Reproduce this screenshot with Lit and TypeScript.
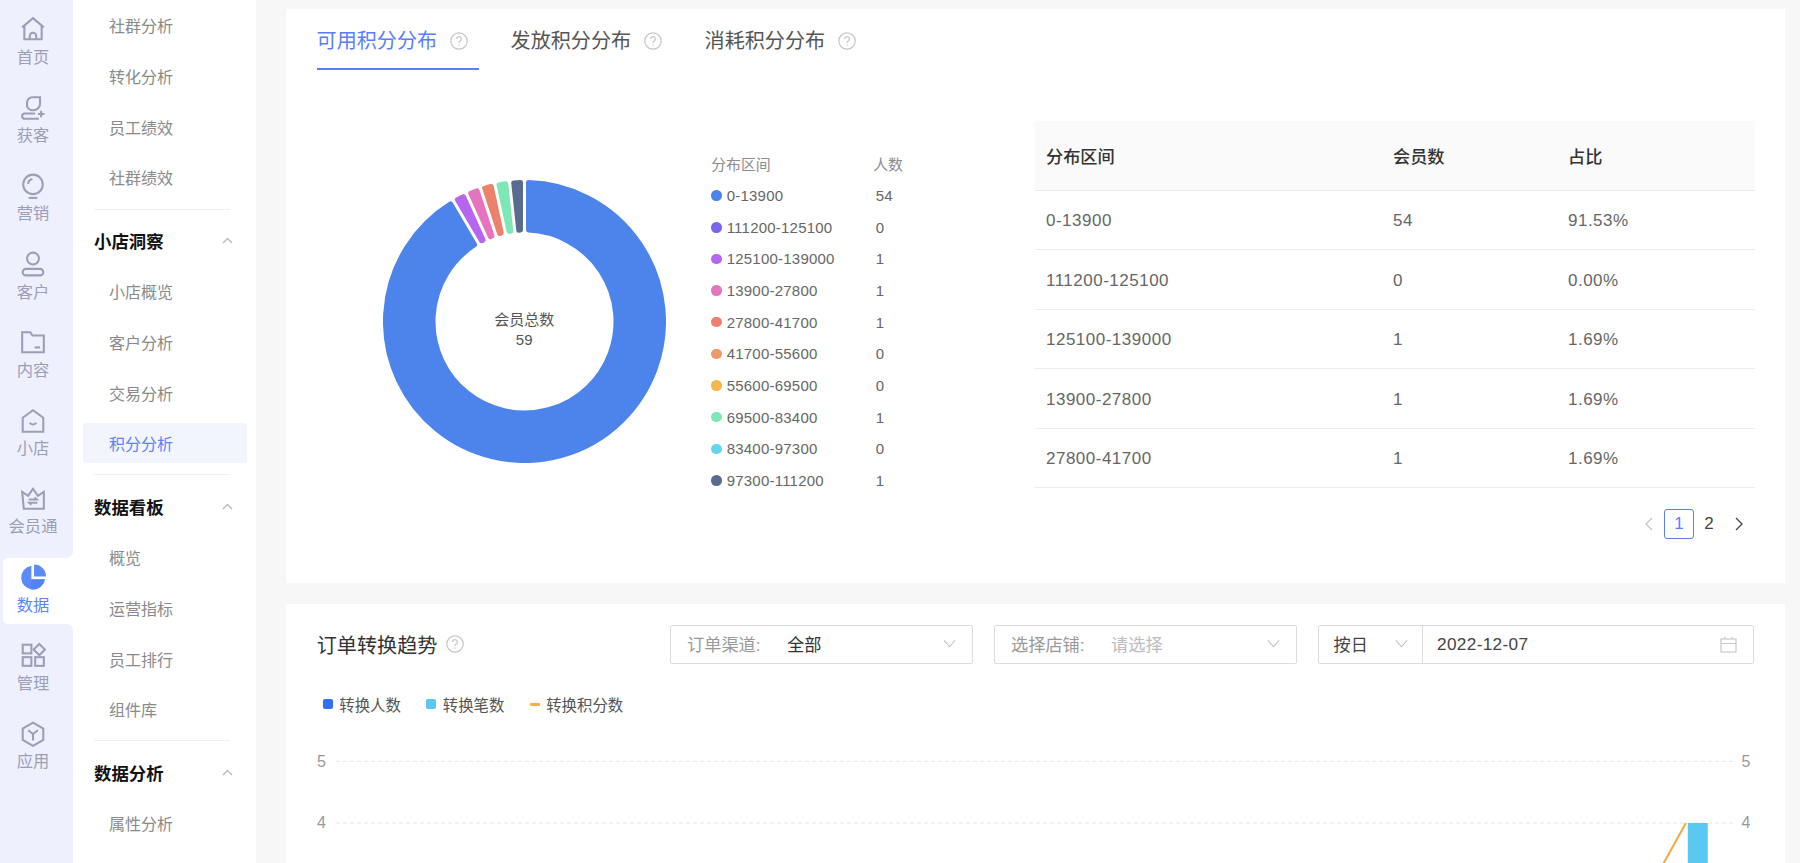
import { LitElement, html, css, svg } from 'lit';
import { customElement } from 'lit/decorators.js';
import { classMap } from 'lit/directives/class-map.js';

const railIcons: Record<string, unknown> = {
  home: svg`<path d="M2 10.5 12 2l10 8.5"/><path d="M4 9v12.5h16V9"/><path d="M9 21.5v-3a3 3 0 0 1 6 0v3"/>`,
  add: svg`<path d="M6.5 10.5V7a5 5 0 0 1 5-5h7v6a6 6 0 0 1-6 6 6 6 0 0 1-6-3.5z"/><path d="M14 17H4.5a2.3 2.3 0 0 0 0 5h13"/><path d="M19.5 14.5v6M16.5 17.5h6"/>`,
  bulb: svg`<circle cx="12" cy="10.5" r="9"/><path d="M7.5 10a5 5 0 0 1 4-4.5"/><path d="M8 23h8"/>`,
  user: svg`<circle cx="12" cy="7" r="5.5"/><rect x="2.5" y="16.5" width="19" height="6" rx="3"/>`,
  folder: svg`<path d="M2 3h7.5l2 3H22v15.5H2z"/><path d="M13.5 17h5"/>`,
  shop: svg`<path d="M2.5 9 12 2l9.5 7v13h-19z"/><path d="M9 13.5a3.4 3.4 0 0 0 6 0"/>`,
  crown: svg`<path d="M2 5.5 7.5 9 12 2.5 16.5 9 22 5.5V21H3.5z"/><path d="M8 12.5h7.5l-2-1.8M16 15.5H8.5l2 1.8"/>`,
  grid: svg`<rect x="2.5" y="2.5" width="8" height="8"/><path d="M17.8 1.8 23 7l-5.2 5.2L12.6 7z"/><rect x="2.5" y="14" width="8" height="8"/><rect x="14" y="14" width="8" height="8"/>`,
  hex: svg`<path d="M12 1.5 21.5 7v10.5L12 23l-9.5-5.5V7z"/><path d="M7.5 8.5 12 12l4.5-3.5M12 12v6"/>`,
};

const railItems = [
  { label: '首页', icon: 'home' },
  { label: '获客', icon: 'add' },
  { label: '营销', icon: 'bulb' },
  { label: '客户', icon: 'user' },
  { label: '内容', icon: 'folder' },
  { label: '小店', icon: 'shop' },
  { label: '会员通', icon: 'crown' },
  { label: '数据', icon: 'pie', active: true },
  { label: '管理', icon: 'grid' },
  { label: '应用', icon: 'hex' },
];

const navGroups = [
  { title: '', items: ['社群分析', '转化分析', '员工绩效', '社群绩效'] },
  { title: '小店洞察', items: ['小店概览', '客户分析', '交易分析', '积分分析'] },
  { title: '数据看板', items: ['概览', '运营指标', '员工排行', '组件库'] },
  { title: '数据分析', items: ['属性分析'] },
];

const ranges = [
  { range: '0-13900', count: 54, pct: '91.53%', color: '#4c84ec' },
  { range: '111200-125100', count: 0, pct: '0.00%', color: '#7a67ee' },
  { range: '125100-139000', count: 1, pct: '1.69%', color: '#b565ee' },
  { range: '13900-27800', count: 1, pct: '1.69%', color: '#e673bd' },
  { range: '27800-41700', count: 1, pct: '1.69%', color: '#ec826b' },
  { range: '41700-55600', count: 0, pct: '', color: '#ec9a6a' },
  { range: '55600-69500', count: 0, pct: '', color: '#f2b84b' },
  { range: '69500-83400', count: 1, pct: '', color: '#7de8b5' },
  { range: '83400-97300', count: 0, pct: '', color: '#66d4ef' },
  { range: '97300-111200', count: 1, pct: '', color: '#596b8f' },
];

// donut slice with rounded corners: inset path + same colour stroke
function slice(a0: number, a1: number) {
  const c = 141.5, ro = 139, ri = 91.5, d = 4;
  const pt = (r: number, a: number) => `${(c + r * Math.sin(a)).toFixed(2)} ${(c - r * Math.cos(a)).toFixed(2)}`;
  const large = a1 - a0 > Math.PI ? 1 : 0;
  return `M${pt(ro, a0 + Math.asin(d / ro))}A${ro} ${ro} 0 ${large} 1 ${pt(ro, a1 - Math.asin(d / ro))}` +
    `L${pt(ri, a1 - Math.asin(d / ri))}A${ri} ${ri} 0 ${large} 0 ${pt(ri, a0 + Math.asin(d / ri))}Z`;
}

const helpIcon = html`<svg class="help" viewBox="0 0 18 18">
  <circle cx="9" cy="9" r="8.2"/>
  <path d="M6.6 7a2.4 2.4 0 1 1 3.6 2.1c-.8.5-1.2.9-1.2 1.9"/>
  <path d="M9 12.6v1.2"/>
</svg>`;

const chevronDown = html`<svg class="chev" viewBox="0 0 14 9"><path d="M1 1l6 7 6-7"/></svg>`;

@customElement('app-root')
export class AppRoot extends LitElement {
  static styles = css`
    :host {
      display: block;
      height: 863px;
      overflow: hidden;
      font-family: "Liberation Sans", "Noto Sans CJK SC", sans-serif;
    }

    .page {
      display: flex;
      height: 863px;
      overflow: hidden;
    }

    /* icon rail */
    .rail {
      width: 73.4px;
      flex: none;
      box-sizing: border-box;
      padding: 9.8px 0 0 3px;
      background: #eef0fd;
    }

    .rail-item {
      position: relative;
      height: 66px;
      margin-bottom: 12.25px;
      display: flex;
      flex-direction: column;
      align-items: center;
      padding-right: 10.4px;
      color: #9b9eb8;
      font-size: 16.3px;
      line-height: 20px;
      border-radius: 5px 0 0 5px;
    }

    .rail-item svg {
      width: 26px;
      height: 26px;
      margin-top: 6.5px;
      margin-bottom: 4.5px;
      fill: none;
      stroke: #9b9eb8;
      stroke-width: 1.9;
    }

    .rail-item.active {
      background: #fff;
      color: #5b84f8;
    }

    .rail-item.active svg {
      stroke: none;
    }

    .rail-item.active::before,
    .rail-item.active::after {
      content: '';
      position: absolute;
      right: 0;
      width: 6px;
      height: 6px;
    }

    .rail-item.active::before {
      top: -6px;
      background: radial-gradient(circle at 0 0, transparent 5.5px, #fff 6px);
    }

    .rail-item.active::after {
      bottom: -6px;
      background: radial-gradient(circle at 0 100%, transparent 5.5px, #fff 6px);
    }

    /* second level nav */
    .nav {
      width: 182.6px;
      flex: none;
      box-sizing: border-box;
      display: flex;
      flex-direction: column;
      background: #fff;
    }

    .nav-item {
      flex: none;
      height: 40.2px;
      margin: 5.23px 9px 5.23px 9.7px;
      padding-left: 26px;
      display: flex;
      align-items: center;
      font-size: 16px;
      color: #8a8a8a;
      border-radius: 3px;
    }

    .nav-item.active {
      background: #f3f5fe;
      color: #5b84f8;
    }

    .nav-divider {
      flex: none;
      height: 1px;
      margin: 6px 26px 5.8px 20.6px;
      background: #f0f0f0;
    }

    .nav-head {
      flex: none;
      height: 50.7px;
      padding: 0 23px 0 20.6px;
      display: flex;
      align-items: center;
      justify-content: space-between;
      font-size: 17.4px;
      font-weight: 700;
      color: #111;
    }

    .nav-head svg {
      width: 11px;
      height: 7px;
      fill: none;
      stroke: #b9b9b9;
      stroke-width: 1.4;
    }

    /* content */
    .main {
      flex: 1;
      min-width: 0;
      box-sizing: border-box;
      padding: 9.3px 15px 0 30px;
      background: #f7f7f7;
    }

    .card {
      background: #fff;
    }

    .card-top {
      height: 573.7px;
      margin-bottom: 21px;
      box-sizing: border-box;
    }

    .tabs {
      display: flex;
      gap: 32px;
      padding-left: 30.6px;
    }

    .tab {
      box-sizing: border-box;
      width: 162px;
      height: 60.7px;
      padding-top: 18px;
      display: flex;
      align-items: flex-start;
      gap: 12.5px;
      font-size: 20.1px;
      line-height: 28px;
      color: #555;
      border-bottom: 2.5px solid transparent;
    }

    .tab.active {
      color: #5b7ef8;
      border-bottom-color: #5b7ef8;
    }

    .help {
      width: 18px;
      height: 18px;
      flex: none;
      margin-top: 5px;
      fill: none;
      stroke: #c6c6c6;
      stroke-width: 1.2;
    }

    .dist {
      display: flex;
      margin-top: 50.7px;
    }

    .dist-left {
      width: 749px;
      flex: none;
      display: flex;
      box-sizing: border-box;
      padding-left: 96.7px;
    }

    .donut {
      position: relative;
      width: 283px;
      height: 283px;
      flex: none;
      margin-top: 59.3px;
    }

    .donut svg {
      display: block;
      width: 283px;
      height: 283px;
    }

    .donut-center {
      position: absolute;
      left: 0;
      right: 0;
      top: 130px;
      text-align: center;
      font-size: 15px;
      line-height: 20px;
      color: #555;
    }

    .legend {
      margin: 27.5px 0 0 45.5px;
      display: grid;
      grid-template-columns: 162px auto;
      grid-auto-rows: 31.65px;
      align-items: center;
      font-size: 15px;
      letter-spacing: 0.22px;
      color: #666;
    }

    .legend-head {
      color: #8c8c8c;
      font-size: 14.9px;
      letter-spacing: 0;
    }

    .legend-name {
      display: flex;
      align-items: center;
      gap: 5px;
    }

    .dot {
      width: 10.5px;
      height: 10.5px;
      border-radius: 50%;
      flex: none;
    }

    .legend-count {
      padding-left: 2.5px;
    }

    .dist-right {
      width: 720px;
      flex: none;
    }

    .row {
      display: grid;
      grid-template-columns: 347px 175px 198px;
      box-sizing: border-box;
      align-items: center;
      height: 59.5px;
      padding: 2px 0 0 11px;
      font-size: 17px;
      letter-spacing: 0.5px;
      color: #666;
      border-bottom: 1px solid #ececec;
    }

    .row.head {
      height: 70.3px;
      padding-top: 0;
      background: #fafafa;
      font-size: 17.2px;
      letter-spacing: 0;
      font-weight: 500;
      color: #333;
    }

    .pager {
      display: flex;
      justify-content: flex-end;
      margin: 20.5px 1px 0 0;
    }

    .pager div {
      box-sizing: border-box;
      width: 30px;
      height: 30px;
      display: flex;
      align-items: center;
      justify-content: center;
      font-size: 17px;
      color: #444;
    }

    .pager .current {
      color: #5b7ef8;
      border: 1px solid #5b7ef8;
      border-radius: 3px;
    }

    .pager svg {
      width: 10px;
      height: 14px;
      fill: none;
      stroke: #444;
      stroke-width: 1.3;
    }

    .pager svg.off {
      stroke: #c4c4c4;
    }

    /* trend card */
    .card-trend {
      box-sizing: border-box;
      height: 400px;
      padding: 20.7px 31px 0 30.8px;
    }

    .trend-head {
      display: flex;
      align-items: center;
      height: 39.6px;
    }

    .trend-title {
      font-size: 20.1px;
      color: #333;
      margin-right: 8.5px;
    }

    .trend-head .help {
      margin-top: 0;
    }

    .controls {
      margin-left: auto;
      display: flex;
      gap: 21px;
    }

    .select {
      box-sizing: border-box;
      width: 303px;
      height: 39.6px;
      padding: 0 16px 2px;
      display: flex;
      align-items: center;
      font-size: 17.2px;
      color: #333;
      border: 1px solid #dcdcdc;
      border-radius: 2px;
    }

    .select .lab {
      width: 100px;
      flex: none;
      color: #999;
    }

    .select .ph {
      color: #bdbdbd;
    }

    .chev {
      width: 13px;
      height: 9px;
      margin-left: auto;
      flex: none;
      fill: none;
      stroke: #bcbcbc;
      stroke-width: 1.1;
    }

    .range {
      box-sizing: border-box;
      width: 436px;
      height: 39.6px;
      display: flex;
      align-items: center;
      font-size: 17.2px;
      color: #444;
      border: 1px solid #dcdcdc;
      border-radius: 2px;
    }

    .range-unit {
      box-sizing: border-box;
      width: 104px;
      height: 100%;
      flex: none;
      padding: 0 14.5px 2px;
      display: flex;
      align-items: center;
      border-right: 1px solid #dcdcdc;
    }

    .range-date {
      flex: 1;
      padding: 0 16px 0 14px;
      display: flex;
      align-items: center;
      justify-content: space-between;
      letter-spacing: 0.35px;
    }

    .range-date svg {
      width: 17px;
      height: 17px;
      fill: none;
      stroke: #c8c8c8;
      stroke-width: 1.2;
    }

    .chart-legend {
      display: flex;
      align-items: center;
      height: 20px;
      margin-top: 30px;
      padding-left: 6px;
      font-size: 15.4px;
      color: #555;
    }

    .chart-legend span {
      display: flex;
      align-items: center;
      gap: 6.5px;
      margin-right: 25.4px;
    }

    .chart-legend i {
      width: 10px;
      height: 10px;
      border-radius: 2px;
    }

    .chart-legend i.line {
      height: 2.5px;
      border-radius: 1px;
    }

    .chart {
      display: block;
      width: 1437.2px;
      height: 150px;
    }

    .chart text {
      font-size: 16px;
      fill: #999;
      dominant-baseline: central;
    }
  `;

  renderRail() {
    return html`<div class="rail">
      ${railItems.map(
        (r) => html`<div class=${classMap({ 'rail-item': true, active: !!r.active })}>
          ${r.icon === 'pie'
            ? html`<svg viewBox="0 0 24 24">
                <path fill="#5b8bf7" d="M10.5 1.6A11 11 0 1 0 23 14H10.5z"/>
                <path fill="#4c7ff0" d="M10.5 14H23a11 11 0 0 1-14.5 9 15 15 0 0 0 2-9z" opacity=".6"/>
                <path fill="#5b8bf7" d="M13 .5A11 11 0 0 1 24 11.5H13z"/>
              </svg>`
            : html`<svg viewBox="0 0 24 24">${railIcons[r.icon]}</svg>`}
          ${r.label}
        </div>`
      )}
    </div>`;
  }

  renderNav() {
    return html`<div class="nav">
      ${navGroups.map(
        (g, i) => html`
          ${i > 0
            ? html`<div class="nav-divider"></div>
                <div class="nav-head">
                  ${g.title}
                  <svg viewBox="0 0 11 7"><path d="M1 6l4.5-4.5L10 6"/></svg>
                </div>`
            : ''}
          ${g.items.map(
            (n) => html`<div class=${classMap({ 'nav-item': true, active: n === '积分分析' })}>${n}</div>`
          )}
        `
      )}
    </div>`;
  }

  renderDonut() {
    const total = ranges.reduce((s, r) => s + r.count, 0);
    let a = 0;
    const parts = ranges
      .filter((r) => r.count > 0)
      .map((r) => {
        const a0 = a;
        a += (r.count / total) * Math.PI * 2;
        return svg`<path d=${slice(a0, a)} fill=${r.color} stroke=${r.color} stroke-width="5" stroke-linejoin="round"/>`;
      });
    return html`<div class="donut">
      <svg viewBox="0 0 283 283">${parts}</svg>
      <div class="donut-center">会员总数<br />59</div>
    </div>`;
  }

  render() {
    return html`<div class="page">
      ${this.renderRail()} ${this.renderNav()}
      <div class="main">
        <div class="card card-top">
          <div class="tabs">
            <div class="tab active">可用积分分布 ${helpIcon}</div>
            <div class="tab">发放积分分布 ${helpIcon}</div>
            <div class="tab">消耗积分分布 ${helpIcon}</div>
          </div>
          <div class="dist">
            <div class="dist-left">
              ${this.renderDonut()}
              <div class="legend">
                <div class="legend-head">分布区间</div>
                <div class="legend-head">人数</div>
                ${ranges.map(
                  (r) => html`<div class="legend-name">
                      <span class="dot" style="background:${r.color}"></span>${r.range}
                    </div>
                    <div class="legend-count">${r.count}</div>`
                )}
              </div>
            </div>
            <div class="dist-right">
              <div class="row head"><div>分布区间</div><div>会员数</div><div>占比</div></div>
              ${ranges.slice(0, 5).map(
                (r) => html`<div class="row"><div>${r.range}</div><div>${r.count}</div><div>${r.pct}</div></div>`
              )}
              <div class="pager">
                <div><svg class="off" viewBox="0 0 10 14"><path d="M8 1 2 7l6 6"/></svg></div>
                <div class="current">1</div>
                <div>2</div>
                <div><svg viewBox="0 0 10 14"><path d="M2 1l6 6-6 6"/></svg></div>
              </div>
            </div>
          </div>
        </div>

        <div class="card card-trend">
          <div class="trend-head">
            <div class="trend-title">订单转换趋势</div>
            ${helpIcon}
            <div class="controls">
              <div class="select"><span class="lab">订单渠道:</span>全部${chevronDown}</div>
              <div class="select"><span class="lab">选择店铺:</span><span class="ph">请选择</span>${chevronDown}</div>
              <div class="range">
                <div class="range-unit">按日${chevronDown}</div>
                <div class="range-date">
                  2022-12-07
                  <svg viewBox="0 0 17 17">
                    <rect x="1" y="3" width="15" height="13"/>
                    <path d="M1 7.5h15M5 .8V3M12 .8V3"/>
                  </svg>
                </div>
              </div>
            </div>
          </div>
          <div class="chart-legend">
            <span><i style="background:#3370f5"></i>转换人数</span>
            <span><i style="background:#5ac8f0"></i>转换笔数</span>
            <span><i class="line" style="background:#f7b13e"></i>转换积分数</span>
          </div>
          <svg class="chart" viewBox="0 0 1437.2 150">
            <path d="M19 47.4H1419M19 109H1419" stroke="#e6e6ee" stroke-width="1" stroke-dasharray="4 3" fill="none"/>
            <text x="0" y="47.4">5</text>
            <text x="0" y="109">4</text>
            <text x="1424.5" y="47.4">5</text>
            <text x="1424.5" y="109">4</text>
            <rect x="1370.8" y="109" width="20" height="41" fill="#5ac8f0"/>
            <path d="M1368.9 109 1346.2 150" stroke="#f3a93b" stroke-width="2" fill="none"/>
          </svg>
        </div>
      </div>
    </div>`;
  }
}
